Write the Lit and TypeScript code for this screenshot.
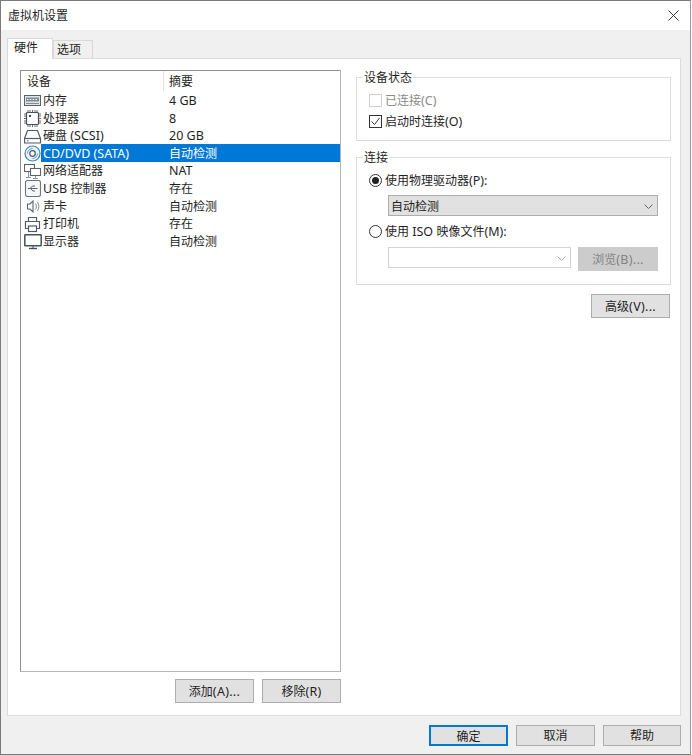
import { LitElement, html, css, svg } from "lit";
import { customElement } from "lit/decorators.js";

const icons: Record<string, unknown> = {
  mem: svg`<rect x="0.500" y="3.500" width="16" height="10" fill="#dfe6ea" stroke="#56616a"/><rect x="2" y="5.500" width="13" height="4" fill="#7f8c96"/><path d="M3 7.500h1.500M5.800 7.500h1.500M8.600 7.500h1.500M11.400 7.500h1.500" stroke="#fff"/><path d="M2 11.500h13" stroke="#7f8a92"/>`,
  cpu: svg`<rect x="2.500" y="2.500" width="12" height="12" rx="1" fill="#fff" stroke="#46525b" stroke-width="1.200"/><path d="M4 0v2M6 0v2M8.500 0v2M11 0v2M13 0v2M4 15v2M6 15v2M8.500 15v2M11 15v2M13 15v2M0 4h2M0 6h2M0 8.500h2M0 11h2M0 13h2M15 4h2M15 6h2M15 8.500h2M15 11h2M15 13h2" stroke="#5f6b74"/><rect x="5" y="5" width="2" height="2" fill="#3f4a53"/>`,
  disk: svg`<path d="M3.500 2.500h10l3 8v4.500h-16v-4.500z" fill="#fff" stroke="#4f5b64" stroke-width="1.200"/><path d="M1 10.500h15" stroke="#4f5b64" stroke-width="1.200"/><path d="M3 12.800h1.500" stroke="#4f5b64"/>`,
  cd: svg`<circle cx="8.500" cy="8.500" r="7.500" fill="#e6f2fa" stroke="#4a86ad" stroke-width="1.200"/><circle cx="8.500" cy="8.500" r="2.800" fill="#fff" stroke="#4a5863" stroke-width="1.200"/><path d="M3.500 8.500a5 5 0 0 1 5-5M13.500 8.500a5 5 0 0 1-5 5" fill="none" stroke="#5fa3d0"/>`,
  net: svg`<rect x="0.500" y="1.500" width="10" height="7" fill="#fff" stroke="#59646d" stroke-width="1.100"/><rect x="6.500" y="5.500" width="10" height="7" fill="#fff" stroke="#59646d" stroke-width="1.100"/><path d="M4.500 9v5.500M2 14.500h5M11.500 13v2.500M9 15.500h5" stroke="#8a949b"/>`,
  usb: svg`<rect x="1.500" y="0.500" width="15" height="16" rx="2" fill="#f4f6f7" stroke="#6b7780" stroke-width="1.100"/><path d="M4 8.500h9.500M6 8.500l2.500-2.500h2.500M6.500 8.500l2.500 2.500h2" fill="none" stroke="#59646d"/>`,
  snd: svg`<path d="M3.500 6h2.500l3-3v11l-3-3h-2.500z" fill="#fff" stroke="#59646d" stroke-width="1.100"/><path d="M11.500 5.500c1.200 2 1.200 4 0 6M13.500 4c1.800 2.800 1.800 6.200 0 9" fill="none" stroke="#7d8890"/>`,
  prn: svg`<path d="M4.500 5.500v-4h8v4M4.500 12.500h-3v-7h14v7h-3" fill="#fff" stroke="#4f5b64" stroke-width="1.200"/><rect x="4.500" y="10" width="8" height="5.500" fill="#fff" stroke="#4f5b64" stroke-width="1.200"/>`,
  mon: svg`<rect x="0.800" y="1.800" width="16.400" height="11" rx="0.500" fill="#fff" stroke="#46525b" stroke-width="1.500"/><path d="M5 15.500h8" stroke="#46525b" stroke-width="1.400"/><path d="M9 13v2" stroke="#46525b"/>`,
};

/* Latin runs are set a touch larger: the reference's UI face is wider than Noto Sans. */
const t = (s: string) =>
  s.split(/([\x20-\x7e]+)/).map((p, i) => (i % 2 ? html`<span class="lat">${p}</span>` : p));

const rows = [
  ["mem", "内存", "4 GB"],
  ["cpu", "处理器", "8"],
  ["disk", "硬盘 (SCSI)", "20 GB"],
  ["cd", "CD/DVD (SATA)", "自动检测"],
  ["net", "网络适配器", "NAT"],
  ["usb", "USB 控制器", "存在"],
  ["snd", "声卡", "自动检测"],
  ["prn", "打印机", "存在"],
  ["mon", "显示器", "自动检测"],
];

const chevron = html`<svg class="chev" width="9" height="5" viewBox="0 0 9 5"><path d="M0.500 0.500L4.500 4.500l4-4" fill="none" stroke="currentColor"/></svg>`;

@customElement("app-root")
export class AppRoot extends LitElement {
  static styles = css`
    :host {
      display: block;
      width: 692px;
      height: 755px;
      overflow: hidden;
      font-family: "Noto Sans", "Noto Sans CJK SC", sans-serif;
      font-size: 12px;
      line-height: 17px;
      color: #1f1f1f;
    }
    .lat {
      font-size: 12.500px;
    }
    .window {
      box-sizing: border-box;
      width: 691px;
      height: 755px;
      border: 1px solid #7a7a7a;
      border-right-color: #9a9a9a;
      background: #f0f0f0;
      display: flex;
      flex-direction: column;
    }
    .title {
      height: 29px;
      flex: none;
      background: #fff;
      display: flex;
      align-items: center;
      justify-content: space-between;
      padding: 0 11px 0 7px;
    }
    .body {
      flex: 1;
      display: flex;
      flex-direction: column;
      padding: 8px 9px 8px 6px;
      min-height: 0;
    }
    .tabs {
      display: flex;
      align-items: flex-end;
      height: 20px;
      flex: none;
    }
    .tab {
      box-sizing: border-box;
      height: 18px;
      width: 40px;
      border: 1px solid #d9d9d9;
      border-bottom: none;
      background: #f0f0f0;
      padding-left: 3px;
      line-height: 18px;
    }
    .tab.on {
      height: 21px;
      width: 46px;
      padding-left: 6px;
      background: #fff;
      line-height: 18px;
      margin-bottom: -1px;
      position: relative;
      z-index: 1;
    }
    .pane {
      box-sizing: border-box;
      height: 658px;
      flex: none;
      background: #fff;
      border: 1px solid #dcdcdc;
      padding: 11px 9px 12px 12px;
      display: grid;
      grid-template-columns: 321px 315px;
      column-gap: 15px;
    }
    .left {
      display: flex;
      flex-direction: column;
      min-height: 0;
    }
    .list {
      box-sizing: border-box;
      height: 602px;
      flex: none;
      border: 1px solid #8f8f8f;
      border-bottom-color: #b5b5b5;
      border-right-color: #b5b5b5;
      background: #fff;
    }
    .head {
      display: grid;
      grid-template-columns: 142px 1fr;
      height: 21px;
      line-height: 21px;
    }
    .head span {
      padding-left: 6px;
    }
    .head span + span {
      border-left: 1px solid #e3e3e3;
      padding-left: 5px;
      height: 20px;
    }
    .row {
      display: grid;
      grid-template-columns: 20px 122px 1fr;
      height: 17.620px;
      align-items: center;
      line-height: 17.620px;
    }
    .row svg {
      margin-left: 3px;
      display: block;
    }
    .row .name {
      white-space: nowrap;
      padding-left: 2px;
    }
    .row .sum {
      padding-left: 6px;
    }
    .row.sel .name,
    .row.sel .sum {
      background: #0078d7;
      color: #fff;
      height: 100%;
      box-shadow: 0 -1px 0 #0078d7;
    }
    .actions {
      display: flex;
      justify-content: flex-end;
      gap: 8px;
      margin-top: 7px;
    }
    button {
      box-sizing: border-box;
      width: 79px;
      height: 24px;
      padding: 1px 0 0;
      border: 1px solid #adadad;
      background: #e1e1e1;
      color: #1f1f1f;
      font: inherit;
      line-height: 20px;
    }
    button .lat {
      letter-spacing: 0.300px;
    }
    button.def {
      height: 21px;
      border: 2px solid #0078d7;
    }
    button.dis {
      border-color: #cccccc;
      background: #cccccc;
      color: #838383;
    }
    .foot {
      display: flex;
      justify-content: flex-end;
      gap: 8px;
      margin-top: 9px;
    }
    .foot button {
      height: 21px;
      padding: 0;
    }
    .foot button:last-child {
      width: 78px;
    }
    .foot button.def {
      width: 79px;
    }
    .right {
      display: flex;
      flex-direction: column;
      padding-top: 7px;
    }
    .group {
      box-sizing: border-box;
      border: 1px solid #dcdcdc;
      position: relative;
      margin: 0;
    }
    .g1 {
      height: 64px;
      padding: 12px 12px 0;
    }
    .g2 {
      height: 128px;
      margin-top: 16px;
      padding: 12px 12px 0;
    }
    .legend {
      position: absolute;
      left: 6px;
      top: -9px;
      padding: 0 1px;
      background: #fff;
    }
    .opt {
      display: flex;
      align-items: center;
      gap: 3px;
      height: 21px;
      white-space: pre;
    }
    .box {
      box-sizing: border-box;
      width: 13px;
      height: 13px;
      border: 1px solid #333;
      background: #fff;
      display: block;
      flex: none;
    }
    .dis-t {
      color: #8a8a8a;
    }
    .box.d {
      border-color: #cfcfcf;
    }
    .radio {
      width: 13px;
      height: 13px;
      display: block;
      flex: none;
    }
    .combo {
      box-sizing: border-box;
      margin-left: 19px;
      height: 21px;
      width: 270px;
      border: 1px solid #adadad;
      background: #e1e1e1;
      display: flex;
      align-items: center;
      justify-content: space-between;
      padding: 1px 4px 0 2px;
    }
    .chev {
      color: #666;
      display: block;
    }
    .row2 {
      display: flex;
      align-items: flex-start;
      gap: 7px;
      margin-left: 19px;
    }
    .combo.off {
      margin-left: 0;
      width: 183px;
      background: #fff;
      border-color: #d4d4d4;
      justify-content: flex-end;
    }
    .combo.off .chev {
      color: #a8a8a8;
    }
    .row2 button {
      width: 80px;
    }
    .gap4 {
      margin-top: 4px;
    }
    .gap5 {
      margin-top: 5px;
    }
    .adv {
      display: flex;
      justify-content: flex-end;
      margin-top: 9px;
      padding-right: 1px;
    }
    .close {
      display: block;
    }
  `;

  private radio(on: boolean) {
    return html`<svg class="radio" viewBox="0 0 13 13">
      <circle cx="6.500" cy="6.500" r="6" fill="#fff" stroke="#333"></circle>
      ${on ? svg`<circle cx="6.500" cy="6.500" r="3.500" fill="#222"></circle>` : ""}
    </svg>`;
  }

  render() {
    return html`<div class="window">
      <div class="title">
        <span>虚拟机设置</span>
        <svg class="close" width="11" height="11" viewBox="0 0 11 11"><path d="M0.500 0.500l10 10M10.500 0.500l-10 10" stroke="#333" fill="none"></path></svg>
      </div>
      <div class="body">
        <div class="tabs">
          <div class="tab on">硬件</div>
          <div class="tab">选项</div>
        </div>
        <div class="pane">
          <div class="left">
            <div class="list">
              <div class="head"><span>设备</span><span>摘要</span></div>
              ${rows.map(
                ([k, n, s]) => html`<div class="row ${k === "cd" ? "sel" : ""}">
                  <svg width="18" height="17" viewBox="0 0 18 17">${icons[k]}</svg>
                  <span class="name">${t(n)}</span>
                  <span class="sum">${t(s)}</span>
                </div>`
              )}
            </div>
            <div class="actions">
              <button>${t("添加(A)...")}</button>
              <button>${t("移除(R)")}</button>
            </div>
          </div>
          <div class="right">
            <div class="group g1">
              <span class="legend">设备状态</span>
              <div class="opt dis-t"><span class="box d"></span><span>${t("已连接(C)")}</span></div>
              <div class="opt">
                <svg class="box" viewBox="0 0 11 11"><path d="M1.500 5.500l3 3 5-6.500" fill="none" stroke="#333"></path></svg><span>${t("启动时连接(O)")}</span>
              </div>
            </div>
            <div class="group g2">
              <span class="legend">连接</span>
              <div class="opt">${this.radio(true)}<span>${t("使用物理驱动器(P):")}</span></div>
              <div class="combo gap4"><span>自动检测</span>${chevron}</div>
              <div class="opt gap5">${this.radio(false)}<span>${t("使用 ISO 映像文件(M):")}</span></div>
              <div class="row2 gap5">
                <div class="combo off">${chevron}</div>
                <button class="dis">${t("浏览(B)...")}</button>
              </div>
            </div>
            <div class="adv"><button>${t("高级(V)...")}</button></div>
          </div>
        </div>
        <div class="foot">
          <button class="def">确定</button>
          <button>取消</button>
          <button>帮助</button>
        </div>
      </div>
    </div>`;
  }
}
